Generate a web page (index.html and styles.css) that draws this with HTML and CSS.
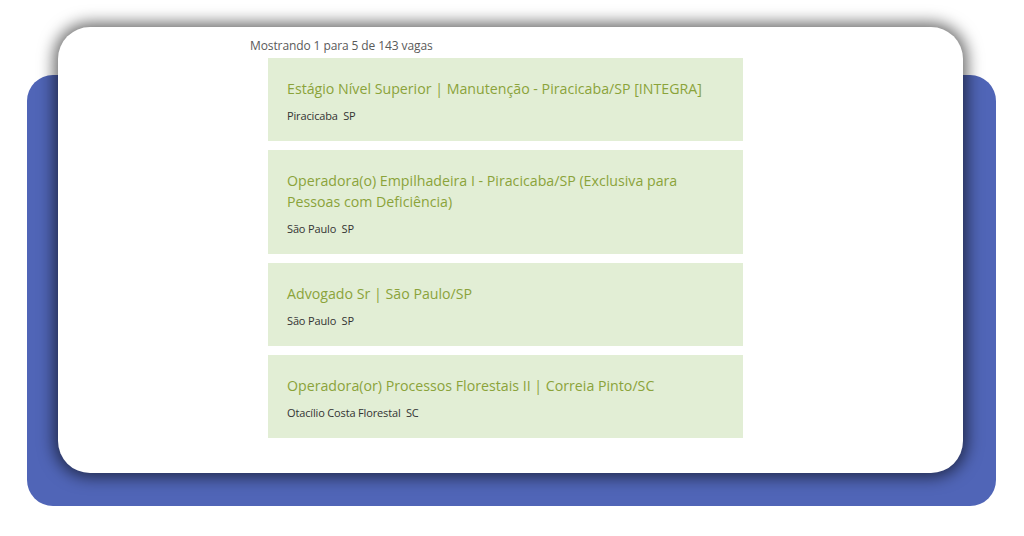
FILE: index.html
```html
<!DOCTYPE html>
<html lang="pt-BR">
<head>
<meta charset="utf-8">
<title>Vagas</title>
<link rel="stylesheet" href="styles.css">
</head>
<body>
<div class="backdrop">
  <div class="sheet">
    <div class="results">
      <p class="count">Mostrando 1 para 5 de 143 vagas</p>
      <ul class="jobs">
        <li class="job">
          <h3 class="job-title">Estágio Nível Superior | Manutenção - Piracicaba/SP [INTEGRA]</h3>
          <p class="job-place">Piracicaba&nbsp; SP</p>
        </li>
        <li class="job">
          <h3 class="job-title">Operadora(o) Empilhadeira I - Piracicaba/SP (Exclusiva para Pessoas com Deficiência)</h3>
          <p class="job-place">São Paulo&nbsp; SP</p>
        </li>
        <li class="job">
          <h3 class="job-title">Advogado Sr | São Paulo/SP</h3>
          <p class="job-place">São Paulo&nbsp; SP</p>
        </li>
        <li class="job">
          <h3 class="job-title">Operadora(or) Processos Florestais II | Correia Pinto/SC</h3>
          <p class="job-place">Otacílio Costa Florestal&nbsp; SC</p>
        </li>
      </ul>
    </div>
  </div>
</div>
</body>
</html>
```
FILE: styles.css
```css
html, body {
  margin: 0;
  padding: 0;
  background: #ffffff;
}

body {
  font-family: "Open Sans", "Liberation Sans", sans-serif;
  overflow: hidden;
}

/* blue panel sitting behind the white sheet */
.backdrop {
  margin: 75px 0 0 27px;
  width: 969px;
  height: 431px;
  background: #5065b7;
  border-radius: 26px;
  display: flow-root;
}

.sheet {
  margin: -48px 0 0 31px;
  width: 905px;
  height: 446px;
  background: #ffffff;
  border-radius: 32px;
  box-shadow: 0 0 16px 4px rgba(0, 0, 0, 0.6);
  overflow: hidden;
}

.results {
  padding: 11px 0 0 192px;
  display: flex;
  flex-direction: column;
}

.count {
  margin: 0;
  font-size: 12px;
  line-height: 16px;
  color: #5a5a5a;
  letter-spacing: -0.1px;
}

.jobs {
  list-style: none;
  margin: 4px 0 0 18px;
  padding: 0;
  width: 475px;
  display: flex;
  flex-direction: column;
  gap: 9px;
}

.job {
  background: #e2eed5;
  padding: 20px 19px 17px;
}

.job-title {
  margin: 0;
  font-size: 14.2px;
  font-weight: 400;
  line-height: 21px;
  color: #8ba33a;
}

.job-place {
  margin: 9px 0 0;
  font-size: 11px;
  line-height: 16px;
  color: #333333;
  letter-spacing: -0.15px;
}
```
